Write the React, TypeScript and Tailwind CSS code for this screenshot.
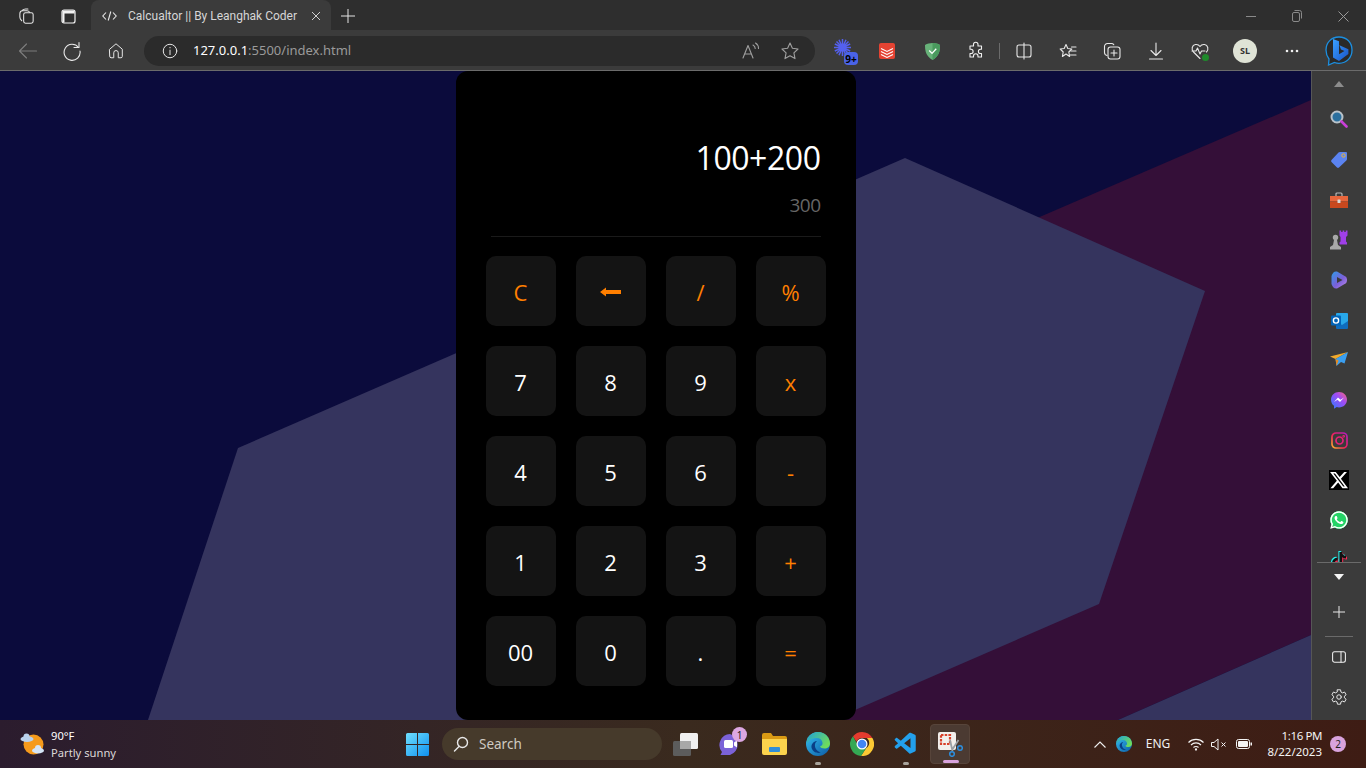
import React from "react";
import { FaXTwitter, FaWhatsapp, FaTiktok } from "react-icons/fa6";
import { VscVscode } from "react-icons/vsc";

const ui = { fontFamily: '"Noto Sans", "Open Sans", sans-serif' };

function Slot({ w, children, className = "" }: { w: string; children?: React.ReactNode; className?: string }) {
  return <div className={`flex h-full shrink-0 items-center justify-center ${w} ${className}`}>{children}</div>;
}

function Line({ size = 20, stroke = "#e8e8e8", children }: { size?: number; stroke?: string; children: React.ReactNode }) {
  return (
    <svg width={size} height={size} viewBox="0 0 20 20" fill="none" stroke={stroke} strokeWidth="1.1" strokeLinecap="round" strokeLinejoin="round">
      {children}
    </svg>
  );
}

function Defs() {
  return (
    <svg className="absolute h-0 w-0">
      <defs>
        <linearGradient id="ig" x1="0" y1="1" x2="1" y2="0">
          <stop offset="0" stopColor="#fdb52b" />
          <stop offset="0.45" stopColor="#f0205a" />
          <stop offset="1" stopColor="#b01fc0" />
        </linearGradient>
        <linearGradient id="ms" x1="0" y1="1" x2="1" y2="0">
          <stop offset="0" stopColor="#2e7cff" />
          <stop offset="0.6" stopColor="#a04bf5" />
          <stop offset="1" stopColor="#ff6a78" />
        </linearGradient>
        <linearGradient id="edgeA" x1="0" y1="0" x2="1" y2="1">
          <stop offset="0" stopColor="#35c1f1" />
          <stop offset="1" stopColor="#0c59a4" />
        </linearGradient>
        <linearGradient id="edgeB" x1="0" y1="0" x2="1" y2="0.6">
          <stop offset="0" stopColor="#1fa3d8" />
          <stop offset="1" stopColor="#6fdc5a" />
        </linearGradient>
        <linearGradient id="bing" x1="0" y1="0" x2="1" y2="1">
          <stop offset="0" stopColor="#3aa0ff" />
          <stop offset="1" stopColor="#1a55c8" />
        </linearGradient>
        <linearGradient id="win" x1="0" y1="0" x2="1" y2="1">
          <stop offset="0" stopColor="#6fe0ff" />
          <stop offset="1" stopColor="#0f8fef" />
        </linearGradient>
        <linearGradient id="cop" x1="0" y1="0" x2="1" y2="1">
          <stop offset="0" stopColor="#2f9be8" />
          <stop offset="0.55" stopColor="#7a5fd8" />
          <stop offset="1" stopColor="#c08ae8" />
        </linearGradient>
      </defs>
    </svg>
  );
}

function Edge({ size = 24 }: { size?: number }) {
  return (
    <svg width={size} height={size} viewBox="0 0 24 24">
      <circle cx="12" cy="12" r="12" fill="url(#edgeA)" />
      <path d="M1 8C3 2.500 8 0 12 0c7 0 12 5.500 12 11.500 0 3-2.500 5-5.500 5-2.500 0-4-1-4.500-2 2-.7 2.800-2.200 2.500-3.700C16 8 14 6 10.500 6 6 6 2.500 8 1 12z" fill="url(#edgeB)" />
      <path d="M15 20.500c-3 1-8 .5-9.500-5C5 11.500 8.500 9 11 9c-1.500 1-2.500 3-2 5.500.6 3.200 3.500 5.500 6 6z" fill="#0a3f86" />
    </svg>
  );
}

function TopBar() {
  return (
    <div className="flex h-[30px] items-end bg-[#2e2e2e]">
      <Slot w="w-[47px]" className="ml-[3px] pt-[2px]">
        <Line size={19}>
          <rect x="7" y="6" width="10" height="11" rx="2" />
          <path d="M5 14.500C3.800 13.500 3 12 3 10.500V7a3 3 0 0 1 3-3h4.500c1.200 0 2 .4 2.800 1.500" />
          <path d="M5.500 3.500c1-1 2-1.500 3.500-1.500h2.500" />
        </Line>
      </Slot>
      <Slot w="w-[41px]" className="pr-[5px] pt-[2px]">
        <svg width="15" height="15" viewBox="0 0 15 15" fill="none">
          <rect x="1" y="1" width="13" height="13" rx="2" stroke="#f2f2f2" strokeWidth="1.200" />
          <path d="M1.500 1.500h12V4.500H3.500v9h-2z" fill="#f2f2f2" />
        </svg>
      </Slot>
      <div className="flex h-full w-[240px] shrink-0 items-center rounded-t-lg bg-[#3b3b3b] pt-[2px]">
        <div className="flex w-[37px] justify-center">
          <svg width="15" height="10" viewBox="0 0 15 10" fill="none" stroke="#e8e8e8" strokeWidth="1.100">
            <path d="M4 1.500L.8 5 4 8.500M11 1.500L14.200 5 11 8.500M8.800 .5L6.200 9.500" />
          </svg>
        </div>
        <span className="w-[183px] whitespace-nowrap text-[12px] text-[#d6d6d6]" style={{ fontFamily: "Roboto, sans-serif" }}>
          Calcualtor || By Leanghak Coder
        </span>
        <svg width="10" height="10" viewBox="0 0 10 10" stroke="#d0d0d0" strokeWidth="1">
          <path d="M1 1l8 8M9 1l-8 8" />
        </svg>
      </div>
      <Slot w="w-[34px]" className="pt-[2px]">
        <svg width="14" height="14" viewBox="0 0 14 14" stroke="#e4e4e4" strokeWidth="1">
          <path d="M7 0v14M0 7h14" />
        </svg>
      </Slot>
      <div className="ml-auto flex h-full pt-[2px]">
        <Slot w="w-[46px]">
          <svg width="10" height="10" viewBox="0 0 10 10" stroke="#8a8a8a"><path d="M0 5.500h10" /></svg>
        </Slot>
        <Slot w="w-[46px]">
          <svg width="10" height="12" viewBox="0 0 10 12" fill="none" stroke="#8a8a8a"><rect x=".5" y="2.500" width="7" height="9" rx="1.500" /><path d="M2.500 .5h5a2 2 0 0 1 2 2v6" /></svg>
        </Slot>
        <Slot w="w-[46px]">
          <svg width="11" height="11" viewBox="0 0 11 11" stroke="#9a9a9a"><path d="M.5 .5l10 10M10.500 .5l-10 10" /></svg>
        </Slot>
      </div>
    </div>
  );
}

function Toolbar() {
  return (
    <div className="flex h-[41px] items-center border-b border-[#6b6b6b] bg-[#3b3b3b] pl-[6px] pt-[2px]">
      <Slot w="w-[44px]">
        <Line stroke="#7d7d7d"><path d="M1.500 10h17M8.500 3l-7 7 7 7" /></Line>
      </Slot>
      <Slot w="w-[44px]">
        <Line size={20}><path d="M16.500 6.500A8 8 0 1 0 18 10" /><path d="M17 1.500v5h-5" /></Line>
      </Slot>
      <Slot w="w-[44px]">
        <Line size={18}><path d="M3 8l7-6 7 6v8a1.500 1.500 0 0 1-1.500 1.500h-3V12a2.500 2.500 0 0 0-5 0v5.500h-3A1.500 1.500 0 0 1 3 16z" /></Line>
      </Slot>
      <div className="ml-[6px] flex h-[30px] w-[671px] shrink-0 items-center rounded-full bg-[#2b2b2b] pl-[17px] pr-[15px]">
        <Line size={18}><circle cx="10" cy="10" r="7.500" /><path d="M10 9v5M10 6v.5" /></Line>
        <span className="ml-[14px] whitespace-nowrap text-[13px]">
          <span className="text-white">127.0.0.1</span>
          <span className="text-[#9a9a9a]">:5500/index.html</span>
        </span>
        <div className="ml-auto flex items-center gap-[19px]">
          <Line stroke="#a0a0a0">
            <path d="M2 17L7 4.500 12 17M3.800 13h6.400" />
            <path d="M12 4c1.500.8 2.200 2 2.200 3.500M14.500 2c2 1.200 3 3 3 5.500" />
          </Line>
          <Line stroke="#a0a0a0">
            <path d="M10 2l2.400 5.300 5.600.7-4.100 3.900 1.100 5.700-5-2.900-5 2.900 1.100-5.700L2 8l5.600-.7z" />
          </Line>
        </div>
      </div>
      <Slot w="w-[40px]" className="ml-[11px]">
        <div className="relative h-6 w-6">
          <svg width="17" height="17" viewBox="0 0 17 17" stroke="#5460ee" strokeWidth="1.500" className="absolute left-0 top-0">
            <path d="M8.500 0v17M0 8.500h17M2.500 2.500l12 12M14.500 2.500l-12 12M5 .8l7 15.400M12 .8L5 16.200M.8 5l15.400 7M.8 12l15.400-7" />
          </svg>
          <div className="absolute bottom-[-2px] right-[0px] flex h-[13px] w-[14px] items-center justify-center rounded-sm bg-[#4a63e8] text-[10px] font-bold leading-none text-black">9+</div>
        </div>
      </Slot>
      <Slot w="w-[42px]">
        <svg width="16" height="16" viewBox="0 0 16 16">
          <rect width="16" height="16" rx="2" fill="#e44332" />
          <path d="M2 5.500l6 3 6-3M2 8.500l6 3 6-3M2 11.500l6 3 6-3" stroke="#fff" strokeWidth="1.100" fill="none" />
        </svg>
      </Slot>
      <Slot w="w-[48px]">
        <svg width="15" height="17" viewBox="0 0 16 18">
          <path d="M8 0C5 0 2.500.8 0 2c0 6 .8 12 8 16 7.200-4 8-10 8-16C13.500.8 11 0 8 0z" fill="#67b279" />
          <path d="M8 0c3 0 5.500.8 8 2 0 6-.8 12-8 16z" fill="#4a9a5e" />
          <path d="M4.500 8l3 3 4.500-5" stroke="#fff" strokeWidth="1.400" fill="none" />
        </svg>
      </Slot>
      <Slot w="w-[40px]">
        <Line size={20} stroke="#f0f0f0">
          <path d="M7.500 3.500a2.200 2.200 0 0 1 4.500 0V5h3.500v3.300h-1a2 2 0 0 0 0 4.200h1V16H12v-1a2.200 2.200 0 0 0-4.500 0v1H4v-3.500h1a2 2 0 0 0 0-4.200H4V5h3.500z" />
        </Line>
      </Slot>
      <Slot w="w-[6px]"><div className="h-4 w-px bg-[#6b6b6b]" /></Slot>
      <Slot w="w-[44px]">
        <Line size={20}><rect x="3" y="4" width="14" height="12" rx="2" /><path d="M10 2v16" /></Line>
      </Slot>
      <Slot w="w-[44px]">
        <Line size={20}>
          <path d="M8 2.500l1.800 4 4 .5-3 3 .8 4.500L8 12l-3.600 2.500L5.200 10l-3-3 4-.5z" transform="translate(0 1)" />
          <path d="M13.500 6H18M13 10h5M12 14h6" />
        </Line>
      </Slot>
      <Slot w="w-[44px]">
        <Line size={20}>
          <path d="M5 14.500c-1.500-.3-2.500-1.500-2.500-3V5.500A3 3 0 0 1 5.500 2.500h4c1 0 1.800.4 2.300 1.200" />
          <rect x="6" y="6" width="12" height="12" rx="2.500" />
          <path d="M12 9v6M9 12h6" />
        </Line>
      </Slot>
      <Slot w="w-[44px]">
        <Line size={20}><path d="M10 2v12M5 9.500l5 5 5-5M3.500 18h13" /></Line>
      </Slot>
      <Slot w="w-[44px]">
        <div className="relative h-5 w-5">
          <Line size={20}>
            <path d="M10 17.500L3.500 11C1 8.500 2 4 5.500 3.500 7.500 3.200 9 4 10 5.500 11 4 12.500 3.200 14.500 3.500 18 4 19 8.500 16.500 11" />
            <path d="M2 10h4l1.500-3 2.500 6 1.500-3H15" />
          </Line>
          <div className="absolute bottom-0 right-[1px] h-[7px] w-[7px] rounded-full bg-[#1f8a2c]" />
        </div>
      </Slot>
      <Slot w="w-[46px]">
        <div className="flex h-[24px] w-[24px] items-center justify-center rounded-full bg-[#dfe3d6] text-[9px] font-bold text-[#333]">SL</div>
      </Slot>
      <Slot w="w-[48px]">
        <svg width="14" height="4" viewBox="0 0 14 4" fill="#f0f0f0"><circle cx="2" cy="2" r="1.300" /><circle cx="7" cy="2" r="1.300" /><circle cx="12" cy="2" r="1.300" /></svg>
      </Slot>
      <Slot w="w-[46px]">
        <svg width="30" height="32" viewBox="0 0 30 32" fill="none">
          <path d="M15 2C7 2 2 8 2 15c0 4 1.500 7 3 9l-.5 6 6-2.500c1.500.5 3 .8 4.500.8 8 0 13-6 13-13.300S23 2 15 2z" stroke="#1c8fe0" strokeWidth="1.300" fill="#2a2a2a" />
          <path d="M9 4l6 2.200v13l5.500-3.200-3.500-1.500-1.600-4.200 9 4v4.700L15 26l-6-3.500z" fill="url(#bing)" />
        </svg>
      </Slot>
    </div>
  );
}

function Backdrop() {
  return (
    <svg className="absolute inset-0 h-full w-full" viewBox="0 0 1311 649" preserveAspectRatio="none">
      <rect width="1311" height="649" fill="#0b0b3c" />
      <polygon points="1311,29 1035,148 800,649 1118,649 1311,564" fill="#340f38" />
      <polygon points="238,377 905,87 1205,220 1099,533 832,649 148,649" fill="#35345e" />
      <polygon points="1311,564 1118,649 1311,649" fill="#35345e" />
    </svg>
  );
}

const keys: { t: React.ReactNode; o?: boolean }[] = [
  { t: "C", o: true },
  {
    t: (
      <svg width="21" height="10" viewBox="0 0 21 10" fill="#ff7f00">
        <path d="M0 5l6-4.500V3h15v4H6v2.500z" />
      </svg>
    ),
    o: true,
  },
  { t: "/", o: true },
  { t: "%", o: true },
  { t: "7" }, { t: "8" }, { t: "9" }, { t: "x", o: true },
  { t: "4" }, { t: "5" }, { t: "6" }, { t: "-", o: true },
  { t: "1" }, { t: "2" }, { t: "3" }, { t: "+", o: true },
  { t: "00" }, { t: "0" }, { t: "." }, { t: "=", o: true },
];

function Calculator() {
  return (
    <div className="relative flex h-[649px] w-[400px] flex-col rounded-[12px] bg-black px-[30px]" style={{ fontFamily: '"Open Sans", "Noto Sans", sans-serif' }}>
      <div className="mx-[5px] flex h-[166px] flex-col items-end border-b border-[#1a1a1a] pt-[62px]">
        <div className="text-[32px] leading-[50px] tracking-[-0.45px] text-white">100+200</div>
        <div className="mt-[8px] text-[19px] leading-[28px] tracking-[-0.5px] text-[#666666]">300</div>
      </div>
      <div className="mt-[19px] grid grid-cols-4 gap-[20px]">
        {keys.map((k, i) => (
          <div key={i} className={`flex h-[70px] w-[70px] items-center justify-center rounded-[10px] bg-[#141414] pt-[2px] text-[22px] ${k.o ? "text-[#ff7f00]" : "text-white"}`}>
            {k.t}
          </div>
        ))}
      </div>
    </div>
  );
}

function SideIcon({ children }: { children: React.ReactNode }) {
  return <div className="flex h-[40px] shrink-0 items-center justify-center">{children}</div>;
}

function Sidebar() {
  return (
    <div className="flex w-[55px] shrink-0 flex-col border-l border-[#565656] bg-[#3b3b3b]">
      <div className="flex h-[491px] flex-col overflow-hidden">
        <div className="flex h-[29px] shrink-0 items-center justify-center pb-[3px]">
          <svg width="10" height="6" viewBox="0 0 10 6" fill="#8c8c8c"><path d="M5 0l5 6H0z" /></svg>
        </div>
        <div className="flex h-[40px] shrink-0 items-center justify-center pb-[3px]">
          <svg width="18" height="18" viewBox="0 0 18 18">
            <circle cx="7" cy="7" r="5.500" fill="#2b6f9e" stroke="#b9c2c9" strokeWidth="2" />
            <path d="M11.500 11.500l5 5" stroke="#c93fd8" strokeWidth="2.600" strokeLinecap="round" />
          </svg>
        </div>
        <SideIcon>
          <svg width="18" height="18" viewBox="0 0 18 18">
            <path d="M10 1h6a1 1 0 0 1 1 1v6a2 2 0 0 1-.6 1.400L9 16.500a1.500 1.500 0 0 1-2 0L1.500 11a1.500 1.500 0 0 1 0-2l7-7.400A2 2 0 0 1 10 1z" fill="#5b83f0" />
            <circle cx="13.500" cy="4.500" r="1.700" fill="#5b83f0" stroke="#f3b82a" strokeWidth="1" />
          </svg>
        </SideIcon>
        <SideIcon>
          <svg width="18" height="17" viewBox="0 0 18 17">
            <path d="M6 4V2a1 1 0 0 1 1-1h4a1 1 0 0 1 1 1v2" stroke="#b8b8b8" strokeWidth="1.200" fill="none" />
            <rect y="4" width="18" height="5.500" fill="#e8663c" />
            <rect y="9.500" width="18" height="6.500" fill="#c8481e" />
            <rect x="7.500" y="7.500" width="3" height="3.500" rx=".5" fill="#d8d8d8" />
          </svg>
        </SideIcon>
        <SideIcon>
          <svg width="18" height="20" viewBox="0 0 18 20">
            <circle cx="5.500" cy="7.500" r="2.700" fill="#a8a8a8" />
            <path d="M4 10h3l1 5 3 2v2.500H0V17l3-2z" fill="#a8a8a8" />
            <path d="M10 1h1.700v1.500h1.400V1h1.700v1.500h1.400V1H18v5l-1.500 1.500V12l1 1v2H10v-2l1-1V7.500L10 6z" fill="#a03fe8" transform="translate(-.5 -.5)" />
          </svg>
        </SideIcon>
        <SideIcon>
          <svg width="17" height="18" viewBox="0 0 17 18">
            <path d="M6 .5l8.500 5c2 1.200 2 5.800 0 7L6 17.500C3 18 1.500 16 .5 13V5C1.500 2 3 0 6 .5z" fill="url(#cop)" />
            <path d="M6 6l5.500 3L6 12z" fill="#3b3b3b" />
          </svg>
        </SideIcon>
        <SideIcon>
          <svg width="17" height="17" viewBox="0 0 17 17">
            <rect x="5" y="1" width="12" height="15" rx="1" fill="#28a8ea" />
            <path d="M5 9l6 4 6-4v7a1 1 0 0 1-1 1H6a1 1 0 0 1-1-1z" fill="#0f6cbd" />
            <rect y="3.500" width="10" height="10" rx="1" fill="#0364b8" />
            <circle cx="5" cy="8.500" r="2.600" fill="none" stroke="#fff" strokeWidth="1.400" />
          </svg>
        </SideIcon>
        <div className="flex h-[40px] shrink-0 items-center justify-center pb-[2px]">
          <svg width="18" height="15" viewBox="0 0 18 15">
            <path d="M0 4.500L18 0 5.500 7z" fill="#f0a92b" />
            <path d="M18 0L5.500 7l1 7L11 10l3.500 1.500z" fill="#3b9ff0" />
            <path d="M5.500 7l1 7 2-5.500z" fill="#e68a1f" />
          </svg>
        </div>
        <SideIcon>
          <svg width="16" height="17" viewBox="0 0 16 17">
            <path d="M8 0c4.500 0 8 3.300 8 7.700s-3.500 7.700-8 7.700c-.8 0-1.600-.1-2.300-.3L3 16.800v-3C1.200 12.400 0 10.200 0 7.700 0 3.300 3.500 0 8 0z" fill="url(#ms)" />
            <path d="M3 10l4-4.500 2.500 2.200L13 5.500 9 10 6.500 7.800z" fill="#fff" />
          </svg>
        </SideIcon>
        <SideIcon>
          <svg width="17" height="17" viewBox="0 0 17 17" fill="none" stroke="#e8207a" strokeWidth="1.700">
            <rect x="1" y="1" width="15" height="15" rx="4" stroke="url(#ig)" />
            <circle cx="8.500" cy="8.500" r="3.500" />
            <circle cx="12.700" cy="4.300" r=".5" />
          </svg>
        </SideIcon>
        <SideIcon>
          <div className="flex h-5 w-5 items-center justify-center bg-black">
            <FaXTwitter size={20} color="#ffffff" />
          </div>
        </SideIcon>
        <SideIcon>
          <FaWhatsapp size={20} color="#ffffff" style={{ background: "radial-gradient(circle, #25d366 62%, transparent 64%)" }} />
        </SideIcon>
        <SideIcon>
          <FaTiktok size={16} color="#111111" style={{ filter: "drop-shadow(-1px -1px 0 #25f4ee) drop-shadow(1px 1px 0 #fe2c55)" }} />
        </SideIcon>
      </div>
      <div className="mx-[5px] h-px shrink-0 bg-[#6a6a6a]" />
      <div className="flex h-[29px] shrink-0 items-center justify-center pb-[1px]">
        <svg width="10" height="6" viewBox="0 0 10 6" fill="#f4f4f4"><path d="M0 0h10L5 6z" /></svg>
      </div>
      <SideIcon>
        <svg width="12" height="12" viewBox="0 0 12 12" stroke="#e8e8e8"><path d="M6 0v12M0 6h12" /></svg>
      </SideIcon>
      <div className="mx-[13px] mt-[4px] h-px shrink-0 bg-[#6a6a6a]" />
      <SideIcon>
        <Line size={16} stroke="#f0f0f0"><rect x="2" y="3.500" width="16" height="13" rx="2.500" strokeWidth="1.300" /><path d="M12.500 3.500v13" strokeWidth="1.300" /></Line>
      </SideIcon>
      <SideIcon>
        <Line size={18} stroke="#e8e8e8">
          <circle cx="10" cy="10" r="2.500" />
          <path d="M8.300 2h3.400l.5 2.500 1.600.9 2.400-.9 1.700 3-1.900 1.600v1.800l1.900 1.600-1.700 3-2.400-.9-1.600.9-.5 2.500H8.300l-.5-2.500-1.600-.9-2.400.9-1.700-3 1.900-1.600V9.100L2.100 7.500l1.700-3 2.400.9 1.600-.9z" />
        </Line>
      </SideIcon>
    </div>
  );
}

function Taskbar() {
  return (
    <div className="flex h-[48px] items-center bg-gradient-to-r from-[#2b1c2e] via-[#3a2a1e] to-[#3e1c14] text-white" style={ui}>
      <div className="flex h-full w-[406px] shrink-0 items-center pl-[20px]">
        <svg width="25" height="25" viewBox="0 0 25 25">
          <circle cx="13.500" cy="12.500" r="10" fill="#f59a1c" />
          <ellipse cx="7" cy="7" rx="6.500" ry="3" fill="#b9d2ee" />
          <circle cx="6.500" cy="4.500" r="3" fill="#b9d2ee" />
          <ellipse cx="18" cy="18.500" rx="6" ry="3" fill="#d4e4f6" />
          <circle cx="18" cy="16" r="3" fill="#d4e4f6" />
        </svg>
        <div className="ml-[6px] flex flex-col">
          <span className="text-[11.200px] leading-[16px]">90°F</span>
          <span className="text-[11.200px] leading-[17px] text-[#dcd8d8]">Partly sunny</span>
        </div>
      </div>
      <svg width="23" height="23" viewBox="0 0 23 23" className="shrink-0">
        <path d="M0 1.500A1.500 1.500 0 0 1 1.500 0H11v11H0zM12 0h9.500A1.500 1.500 0 0 1 23 1.500V11H12zM0 12h11v11H1.500A1.500 1.500 0 0 1 0 21.500zM12 12h11v9.500a1.500 1.500 0 0 1-1.500 1.500H12z" fill="url(#win)" />
      </svg>
      <div className="ml-[13px] flex h-[32px] w-[220px] shrink-0 items-center rounded-full bg-[#463a2b] pl-[11px]">
        <svg width="16" height="16" viewBox="0 0 16 16" fill="none" stroke="#e8e8e8" strokeWidth="1.400" strokeLinecap="round">
          <circle cx="9.500" cy="6.500" r="5" />
          <path d="M6 10.500L1.500 15" />
        </svg>
        <span className="ml-[10px] text-[13.500px] text-[#cfcac2]">Search</span>
      </div>
      <Slot w="w-[44px]" className="ml-[2px]">
        <svg width="26" height="24" viewBox="0 0 26 24">
          <rect x="0" y="9" width="18" height="15" rx="1.500" fill="#5c5c5c" />
          <rect x="7" y="1" width="18" height="16" rx="1.500" fill="#f0f0f0" />
          <rect x="7" y="9" width="11" height="8" fill="#a8a8a8" />
        </svg>
      </Slot>
      <Slot w="w-[44px]" className="relative">
        <svg width="24" height="24" viewBox="0 0 24 24">
          <path d="M12 2a11 11 0 0 1 0 21H2.500l1.500-3A11 11 0 0 1 12 2z" fill="#7b62d8" />
          <rect x="6" y="8" width="9" height="8" rx="1.500" fill="#fff" />
          <path d="M16 10.500l3-2v7l-3-2z" fill="#fff" />
        </svg>
        <div className="absolute left-[24px] top-[7px] flex h-[15px] w-[15px] items-center justify-center rounded-full bg-[#dca7e2] text-[10px] leading-none text-[#222]">1</div>
      </Slot>
      <Slot w="w-[44px]">
        <svg width="25" height="22" viewBox="0 0 25 22">
          <path d="M0 2a2 2 0 0 1 2-2h7l2 3h12a2 2 0 0 1 2 2v3H0z" fill="#d99a14" />
          <path d="M0 6h25v14a2 2 0 0 1-2 2H2a2 2 0 0 1-2-2z" fill="#fbd34d" />
          <rect x="7" y="14" width="11" height="5" rx="1" fill="#2f8ed8" />
        </svg>
      </Slot>
      <Slot w="w-[44px]" className="relative">
        <Edge />
        <div className="absolute bottom-[3px] left-[19px] h-[3px] w-[6px] rounded-full bg-[#a9a49c]" />
      </Slot>
      <Slot w="w-[44px]">
        <svg width="24" height="24" viewBox="0 0 24 24">
          <path d="M12 0a12 12 0 0 1 10.400 6H12a6 6 0 0 0-5.600 3.800L3 4.200A12 12 0 0 1 12 0z" fill="#e33b2e" />
          <path d="M22.400 6A12 12 0 0 1 11 24l5.200-8a6 6 0 0 0 .6-10z" fill="#fcc934" />
          <path d="M3 4.200l5.200 9.800a6 6 0 0 0 8 2L11 24A12 12 0 0 1 3 4.200z" fill="#34a853" />
          <circle cx="12" cy="12" r="5.500" fill="#fff" />
          <circle cx="12" cy="12" r="4.300" fill="#4285f4" />
        </svg>
      </Slot>
      <Slot w="w-[44px]" className="relative">
        <VscVscode size={26} color="#23a0ec" />
        <div className="absolute bottom-[3px] left-[19px] h-[3px] w-[6px] rounded-full bg-[#a9a49c]" />
      </Slot>
      <Slot w="w-[44px]" className="relative">
        <div className="relative flex h-[40px] w-[40px] items-center justify-center rounded-[4px] border border-[#57443a] bg-[#4b3a32]">
          <svg width="25" height="25" viewBox="0 0 25 25">
            <rect width="18" height="18" rx="2" fill="#f2efec" />
            <path d="M3 3h9v9H3z" fill="none" stroke="#d8402a" strokeWidth="2.200" strokeDasharray="2.500 1.200" />
            <path d="M12 9l2.500 11M20.500 9L14 19" stroke="#9aa0a6" strokeWidth="1.800" fill="none" transform="translate(0 -1)" />
            <circle cx="14" cy="22" r="2.300" fill="none" stroke="#2c8fe0" strokeWidth="1.500" />
            <circle cx="22" cy="16" r="2.300" fill="none" stroke="#2c8fe0" strokeWidth="1.500" />
          </svg>
          <div className="absolute bottom-0 left-[12px] h-[3px] w-[16px] rounded-full bg-[#d9a3dd]" />
        </div>
      </Slot>
      <div className="ml-auto flex h-full items-center pr-[20px]">
        <Slot w="w-[24px]">
          <svg width="12" height="7" viewBox="0 0 12 7" fill="none" stroke="#f0f0f0" strokeWidth="1.100"><path d="M.5 6.500L6 1l5.500 5.500" /></svg>
        </Slot>
        <Slot w="w-[24px]"><Edge size={16} /></Slot>
        <Slot w="w-[44px]"><span className="text-[12px] text-[#f0f0f0]">ENG</span></Slot>
        <Slot w="w-[24px]" className="ml-[4px]">
          <svg width="16" height="13" viewBox="0 0 16 13" fill="none" stroke="#f4f4f4" strokeWidth="1.100">
            <path d="M.5 4.500a10.500 10.500 0 0 1 15 0M3 7a7 7 0 0 1 10 0M5.500 9.500a3.500 3.500 0 0 1 5 0" />
            <circle cx="8" cy="11.500" r=".6" fill="#f4f4f4" />
          </svg>
        </Slot>
        <Slot w="w-[22px]">
          <svg width="16" height="13" viewBox="0 0 16 13" fill="none" stroke="#f4f4f4" strokeWidth="1">
            <path d="M.5 4.500h2.500L7 1v11L3 8.500H.5zM10.500 4.500l4 4M14.500 4.500l-4 4" />
          </svg>
        </Slot>
        <Slot w="w-[24px]" className="ml-[2px]">
          <svg width="16" height="10" viewBox="0 0 16 10">
            <rect x=".5" y=".5" width="13" height="9" rx="2" fill="none" stroke="#f4f4f4" />
            <rect x="2" y="2" width="10" height="6" rx="1" fill="#f4f4f4" />
            <rect x="14.500" y="3.500" width="1.500" height="3" fill="#f4f4f4" />
          </svg>
        </Slot>
        <div className="flex w-[66px] flex-col items-end whitespace-nowrap text-[11.500px] leading-[16px] text-[#f4f4f4]">
          <span className="tracking-[-0.4px]">1:16 PM</span>
          <span>8/22/2023</span>
        </div>
        <div className="ml-[8px] flex h-[16px] w-[16px] items-center justify-center rounded-full bg-[#d9a3dd] text-[10px] leading-none text-[#222]">2</div>
      </div>
    </div>
  );
}

export default function App() {
  return (
    <div className="flex h-[768px] w-[1366px] flex-col overflow-hidden bg-black" style={ui}>
      <Defs />
      <TopBar />
      <Toolbar />
      <div className="flex h-[649px]">
        <div className="relative flex flex-1 justify-center overflow-hidden">
          <Backdrop />
          <Calculator />
        </div>
        <Sidebar />
      </div>
      <Taskbar />
    </div>
  );
}
